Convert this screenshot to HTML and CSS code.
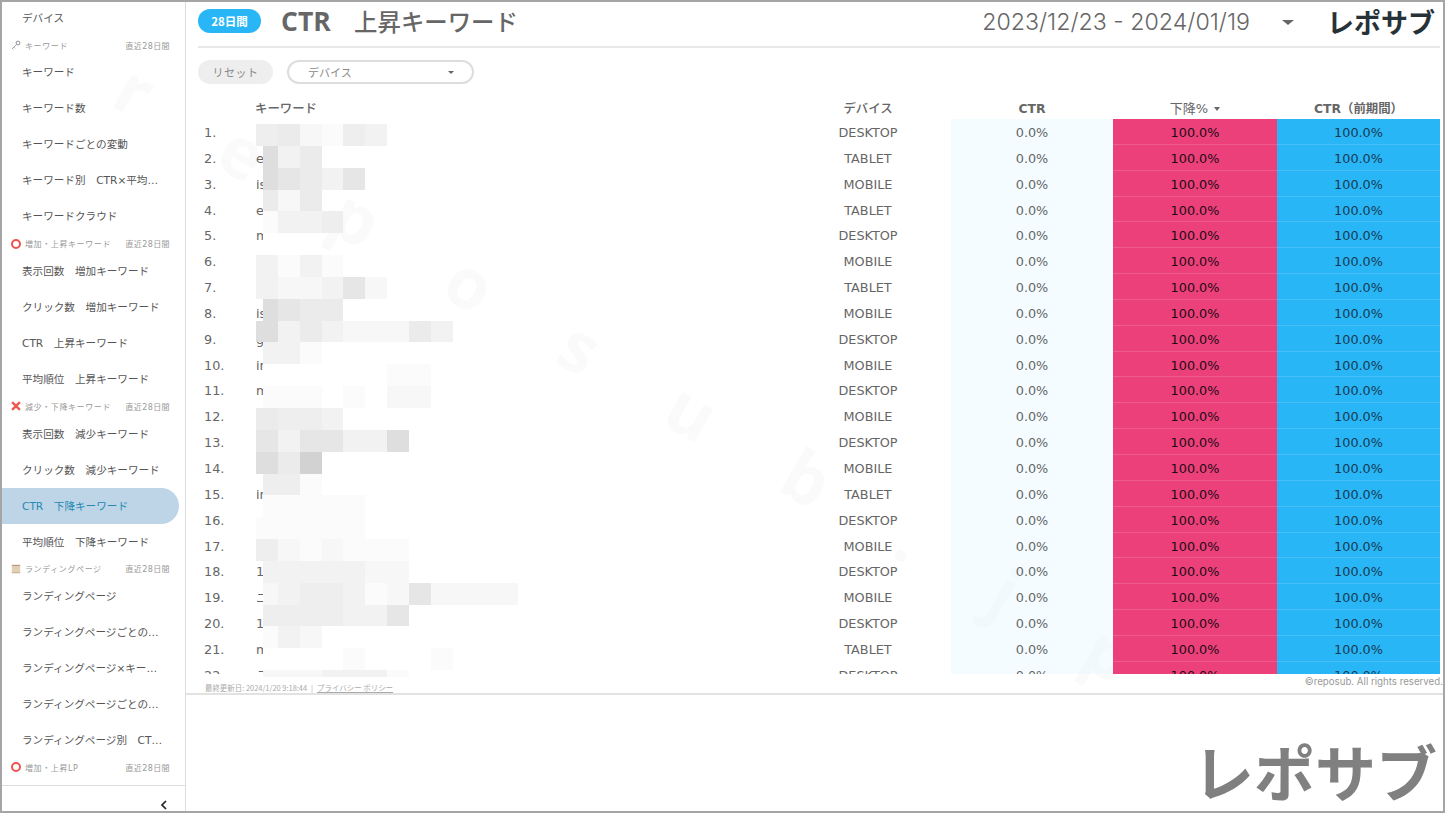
FILE: index.html
```html
<!DOCTYPE html>
<html lang="ja">
<head>
    <meta charset="UTF-8">
    <meta name="viewport" content="width=device-width, initial-scale=1.0">
    <title>CTR 上昇キーワード</title>
    <link rel="stylesheet" href="styles.css">
</head>
<body>
<div class="page">
    <div class="watermark">reposub.jp</div>

    <aside class="sidebar">
        <nav class="nav">
            <a class="nav-item">デバイス</a>
            <div class="nav-head">
                <svg class="nav-icon" viewBox="0 0 12 12"><circle cx="8.4" cy="3.6" r="2.3" fill="none" stroke="#8f8f8f" stroke-width="1.2"/><path d="M6.8 5.2 1.3 10.7M3.4 8.6l1.4 1.4M1.8 10.2l1 1" fill="none" stroke="#9a9a9a" stroke-width="1.1"/></svg>
                <span class="nav-label">キーワード</span><span class="nav-range">直近28日間</span>
            </div>
            <a class="nav-item">キーワード</a>
            <a class="nav-item">キーワード数</a>
            <a class="nav-item">キーワードごとの変動</a>
            <a class="nav-item">キーワード別　CTR×平均順位</a>
            <a class="nav-item">キーワードクラウド</a>
            <div class="nav-head">
                <span class="ring"></span>
                <span class="nav-label">増加・上昇キーワード</span><span class="nav-range">直近28日間</span>
            </div>
            <a class="nav-item">表示回数　増加キーワード</a>
            <a class="nav-item">クリック数　増加キーワード</a>
            <a class="nav-item">CTR　上昇キーワード</a>
            <a class="nav-item">平均順位　上昇キーワード</a>
            <div class="nav-head">
                <svg class="nav-icon" viewBox="0 0 12 12"><path d="M1.3 1.3 10.7 10.7M10.7 1.3 1.3 10.7" fill="none" stroke="#ea5a50" stroke-width="2.8"/></svg>
                <span class="nav-label">減少・下降キーワード</span><span class="nav-range">直近28日間</span>
            </div>
            <a class="nav-item">表示回数　減少キーワード</a>
            <a class="nav-item">クリック数　減少キーワード</a>
            <a class="nav-item active">CTR　下降キーワード</a>
            <a class="nav-item">平均順位　下降キーワード</a>
            <div class="nav-head">
                <svg class="nav-icon" viewBox="0 0 12 12"><rect x="1" y="1" width="10" height="10" fill="#e2d0b6"/><rect x="1" y="1" width="10" height="1.5" fill="#b9a180"/><rect x="1" y="9.8" width="10" height="1.2" fill="#c9b292"/></svg>
                <span class="nav-label">ランディングページ</span><span class="nav-range">直近28日間</span>
            </div>
            <a class="nav-item">ランディングページ</a>
            <a class="nav-item">ランディングページごとの変動</a>
            <a class="nav-item">ランディングページ×キーワード</a>
            <a class="nav-item">ランディングページごとの表示回数</a>
            <a class="nav-item">ランディングページ別　CTR×平均順位</a>
            <div class="nav-head">
                <span class="ring"></span>
                <span class="nav-label">増加・上昇LP</span><span class="nav-range">直近28日間</span>
            </div>
        </nav>
        <div class="nav-foot">
            <svg class="chevron" viewBox="0 0 8 10"><path d="M6 1 2 5l4 4" fill="none" stroke="#222" stroke-width="1.7"/></svg>
        </div>
    </aside>

    <main class="main">
        <section class="report">
            <header class="topbar">
                <span class="badge">28日間</span>
                <h1 class="title"><b>CTR</b>　上昇キーワード</h1>
                <span class="dates">2023/12/23 - 2024/01/19</span>
                <span class="date-caret"></span>
                <span class="logo">レポサブ</span>
            </header>

            <div class="filters">
                <button class="reset">リセット</button>
                <div class="select">デバイス<span class="select-caret"></span></div>
            </div>

            <div class="table">
                <div class="row head">
                    <div></div>
                    <div class="kw-head">キーワード</div>
                    <div class="num">デバイス</div>
                    <div class="num strong">CTR</div>
                    <div class="num sorted">下降%<span class="sort-caret"></span></div>
                    <div class="num strong">CTR（前期間）</div>
                </div>
                <div class="rows">
                    <div class="row"><div class="rank">1.</div><div class="kw"></div><div class="num">DESKTOP</div><div class="num ctr">0.0%</div><div class="num drop">100.0%</div><div class="num prev">100.0%</div></div>
                    <div class="row"><div class="rank">2.</div><div class="kw">e</div><div class="num">TABLET</div><div class="num ctr">0.0%</div><div class="num drop">100.0%</div><div class="num prev">100.0%</div></div>
                    <div class="row"><div class="rank">3.</div><div class="kw">is</div><div class="num">MOBILE</div><div class="num ctr">0.0%</div><div class="num drop">100.0%</div><div class="num prev">100.0%</div></div>
                    <div class="row"><div class="rank">4.</div><div class="kw">e</div><div class="num">TABLET</div><div class="num ctr">0.0%</div><div class="num drop">100.0%</div><div class="num prev">100.0%</div></div>
                    <div class="row"><div class="rank">5.</div><div class="kw">m</div><div class="num">DESKTOP</div><div class="num ctr">0.0%</div><div class="num drop">100.0%</div><div class="num prev">100.0%</div></div>
                    <div class="row"><div class="rank">6.</div><div class="kw">テ</div><div class="num">MOBILE</div><div class="num ctr">0.0%</div><div class="num drop">100.0%</div><div class="num prev">100.0%</div></div>
                    <div class="row"><div class="rank">7.</div><div class="kw"></div><div class="num">TABLET</div><div class="num ctr">0.0%</div><div class="num drop">100.0%</div><div class="num prev">100.0%</div></div>
                    <div class="row"><div class="rank">8.</div><div class="kw">is</div><div class="num">MOBILE</div><div class="num ctr">0.0%</div><div class="num drop">100.0%</div><div class="num prev">100.0%</div></div>
                    <div class="row"><div class="rank">9.</div><div class="kw">g</div><div class="num">DESKTOP</div><div class="num ctr">0.0%</div><div class="num drop">100.0%</div><div class="num prev">100.0%</div></div>
                    <div class="row"><div class="rank">10.</div><div class="kw">in</div><div class="num">MOBILE</div><div class="num ctr">0.0%</div><div class="num drop">100.0%</div><div class="num prev">100.0%</div></div>
                    <div class="row"><div class="rank">11.</div><div class="kw">m</div><div class="num">DESKTOP</div><div class="num ctr">0.0%</div><div class="num drop">100.0%</div><div class="num prev">100.0%</div></div>
                    <div class="row"><div class="rank">12.</div><div class="kw"></div><div class="num">MOBILE</div><div class="num ctr">0.0%</div><div class="num drop">100.0%</div><div class="num prev">100.0%</div></div>
                    <div class="row"><div class="rank">13.</div><div class="kw"></div><div class="num">DESKTOP</div><div class="num ctr">0.0%</div><div class="num drop">100.0%</div><div class="num prev">100.0%</div></div>
                    <div class="row"><div class="rank">14.</div><div class="kw">e</div><div class="num">MOBILE</div><div class="num ctr">0.0%</div><div class="num drop">100.0%</div><div class="num prev">100.0%</div></div>
                    <div class="row"><div class="rank">15.</div><div class="kw">in</div><div class="num">TABLET</div><div class="num ctr">0.0%</div><div class="num drop">100.0%</div><div class="num prev">100.0%</div></div>
                    <div class="row"><div class="rank">16.</div><div class="kw"></div><div class="num">DESKTOP</div><div class="num ctr">0.0%</div><div class="num drop">100.0%</div><div class="num prev">100.0%</div></div>
                    <div class="row"><div class="rank">17.</div><div class="kw"></div><div class="num">MOBILE</div><div class="num ctr">0.0%</div><div class="num drop">100.0%</div><div class="num prev">100.0%</div></div>
                    <div class="row"><div class="rank">18.</div><div class="kw">1</div><div class="num">DESKTOP</div><div class="num ctr">0.0%</div><div class="num drop">100.0%</div><div class="num prev">100.0%</div></div>
                    <div class="row"><div class="rank">19.</div><div class="kw">ニ</div><div class="num">MOBILE</div><div class="num ctr">0.0%</div><div class="num drop">100.0%</div><div class="num prev">100.0%</div></div>
                    <div class="row"><div class="rank">20.</div><div class="kw">1</div><div class="num">DESKTOP</div><div class="num ctr">0.0%</div><div class="num drop">100.0%</div><div class="num prev">100.0%</div></div>
                    <div class="row"><div class="rank">21.</div><div class="kw">m</div><div class="num">TABLET</div><div class="num ctr">0.0%</div><div class="num drop">100.0%</div><div class="num prev">100.0%</div></div>
                    <div class="row"><div class="rank">22.</div><div class="kw">テ</div><div class="num">DESKTOP</div><div class="num ctr">0.0%</div><div class="num drop">100.0%</div><div class="num prev">100.0%</div></div>
                </div>
            </div>

            <div class="report-foot">
                <span class="updated">最終更新日: 2024/1/20 9:18:44<span class="sep">|</span><a class="policy">プライバシー ポリシー</a></span>
                <span class="copy">©reposub. All rights reserved.</span>
            </div>

            <!-- keyword blur -->
            <div class="mosaic">
                <div><i class="s4"></i><i class="s5"></i><i class="s2"></i><i class="s1"></i><i class="s4"></i><i class="s3"></i></div>
                <div><i class="clip s7"></i><i class="s3"></i><i class="s5"></i></div>
                <div><i class="clip s7"></i><i class="s6"></i><i class="s5"></i><i class="s3"></i><i class="s6"></i></div>
                <div><i class="clip s5"></i><i class="s2"></i><i class="s5"></i></div>
                <div><i class="clip s1"></i><i class="s3"></i><i class="s3"></i><i class="s4"></i></div>
                <div><i class="clip s0"></i><i class="s0"></i><i class="s0"></i></div>
                <div><i class="s3"></i><i class="s1"></i><i class="s3"></i><i class="s1"></i></div>
                <div><i class="s3"></i><i class="s2"></i><i class="s2"></i><i class="s3"></i><i class="s6"></i><i class="s2"></i></div>
                <div><i class="clip s7"></i><i class="s6"></i><i class="s5"></i><i class="s5"></i></div>
                <div><i class="s7"></i><i class="s3"></i><i class="s5"></i><i class="s3"></i><i class="s2"></i><i class="s2"></i><i class="s2"></i><i class="s5"></i><i class="s3"></i></div>
                <div><i class="clip s3"></i><i class="s3"></i><i class="s1"></i></div>
                <div><i class="clip s0"></i><i class="s0"></i><i class="s0"></i><i class="s0"></i><i class="s0"></i><i class="s0"></i><i class="s1"></i><i class="s1"></i></div>
                <div><i class="clip s1"></i><i class="s1"></i><i class="s1"></i><i class="s0"></i><i class="s1"></i><i class="s0"></i><i class="s2"></i><i class="s2"></i></div>
                <div><i class="s5"></i><i class="s4"></i><i class="s4"></i><i class="s3"></i></div>
                <div><i class="s6"></i><i class="s3"></i><i class="s6"></i><i class="s6"></i><i class="s3"></i><i class="s3"></i><i class="s7"></i></div>
                <div><i class="s7"></i><i class="s5"></i><i class="s8"></i></div>
                <div><i class="clip s4"></i><i class="s4"></i><i class="s1"></i></div>
                <div><i class="clip s1"></i><i class="s1"></i><i class="s1"></i><i class="s1"></i><i class="s1"></i></div>
                <div><i class="s1"></i><i class="s1"></i><i class="s1"></i><i class="s1"></i><i class="s1"></i></div>
                <div><i class="s4"></i><i class="s2"></i><i class="s1"></i><i class="s2"></i><i class="s1"></i><i class="s1"></i><i class="s1"></i></div>
                <div><i class="clip s3"></i><i class="s3"></i><i class="s3"></i><i class="s3"></i><i class="s3"></i><i class="s2"></i><i class="s2"></i></div>
                <div><i class="clip s2"></i><i class="s3"></i><i class="s4"></i><i class="s4"></i><i class="s3"></i><i class="s1"></i><i class="s2"></i><i class="s6"></i><i class="s2"></i><i class="s2"></i><i class="s2"></i><i class="s2"></i></div>
                <div><i class="clip s4"></i><i class="s4"></i><i class="s4"></i><i class="s4"></i><i class="s3"></i><i class="s3"></i><i class="s6"></i></div>
                <div><i class="clip s1"></i><i class="s3"></i><i class="s2"></i></div>
                <div><i class="clip s0"></i><i class="s0"></i><i class="s0"></i><i class="s0"></i><i class="s1"></i><i class="s0"></i><i class="s0"></i><i class="s0"></i><i class="s1"></i></div>
                <div class="last"><i class="clip s2"></i><i class="s2"></i><i class="s2"></i><i class="s3"></i><i class="s3"></i><i class="s3"></i><i class="s1"></i></div>
            </div>
        </section>

        <div class="brand">レポサブ</div>
    </main>
</div>
</body>
</html>
```

FILE: styles.css
```css
* {
    box-sizing: border-box;
}
html, body {
    margin: 0;
    height: 100%;
    overflow: hidden;
}
body {
    font-family: "Noto Sans CJK JP", sans-serif;
    color: #666;
    background-color: #fff;
}
.page {
    position: relative;
    display: flex;
    width: 1445px;
    height: 813px;
    border: 2px solid #a5a5a5;
    overflow: hidden;
}

/* sidebar */
.sidebar {
    position: relative;
    z-index: 1;
    display: flex;
    flex-direction: column;
    flex: none;
    width: 184px;
    border-right: 1px solid #ddd;
}
.nav {
    flex: none;
    height: 785.2px;
    margin-top: -2.2px;
    overflow: hidden;
}
.nav-item {
    display: block;
    height: 36px;
    width: 177px;
    padding-left: 20px;
    padding-right: 15px;
    font-family: "DejaVu Sans", "Noto Sans CJK JP", sans-serif;
    font-size: 10.6px;
    line-height: 36px;
    color: #555;
    white-space: nowrap;
    overflow: hidden;
    text-overflow: ellipsis;
}
.nav-item.active {
    background-color: #bdd5e6;
    border-radius: 0 18px 18px 0;
    color: #2489b3;
}
.nav-head {
    display: flex;
    align-items: center;
    height: 18.6px;
    padding: 0 15px 0 9px;
    font-family: "DejaVu Sans", "Noto Sans CJK JP", sans-serif;
    font-size: 8px;
    color: #999;
}
.nav-icon {
    flex: none;
    width: 10px;
    height: 10px;
}
.ring {
    flex: none;
    width: 10px;
    height: 10px;
    border: 2px solid #ef5350;
    border-radius: 50%;
}
.nav-label {
    margin-left: 4px;
    letter-spacing: 0.6px;
}
.nav-range {
    margin-left: auto;
    letter-spacing: 0.4px;
}
.nav-foot {
    display: flex;
    justify-content: flex-end;
    flex: 1;
    padding: 14px 17px 0 0;
    border-top: 1px solid #ddd;
}
.chevron {
    width: 8px;
    height: 10px;
}

/* report */
.main {
    position: relative;
    z-index: 1;
    flex: 1;
    display: flex;
    flex-direction: column;
    min-width: 0;
}
.report {
    position: relative;
    height: 693px;
    padding: 0 3px 0 12px;
    border-bottom: 2px solid #e2e2e2;
}
.topbar {
    display: flex;
    align-items: center;
    height: 46px;
    padding-bottom: 6px;
    border-bottom: 2px solid #e8e8e8;
}
.badge {
    width: 63px;
    height: 24px;
    border-radius: 12px;
    background-color: #29b6f6;
    color: #fff;
    font-size: 11.5px;
    font-weight: 700;
    line-height: 24px;
    text-align: center;
}
.title {
    margin: 0 0 0 20px;
    font-size: 23.4px;
    font-weight: 500;
    line-height: 30px;
    color: #666;
}
.title b {
    font-family: "Open Sans", sans-serif;
    font-size: 26.5px;
    font-weight: 700;
}
.dates {
    margin: 2px 0 0 auto;
    font-family: Inter, sans-serif;
    font-size: 23.2px;
    font-weight: 300;
    color: #666;
}
.date-caret {
    margin: 2px 0 0 32px;
    border-top: 5px solid #666;
    border-left: 6px solid transparent;
    border-right: 6px solid transparent;
}
.logo {
    margin: 2px 5px 0 33px;
    font-size: 27px;
    font-weight: 700;
    line-height: 34px;
    color: #263238;
}
.filters {
    display: flex;
    align-items: center;
    gap: 14px;
    margin-top: 12px;
    height: 24px;
}
.reset {
    width: 75px;
    height: 24px;
    padding: 0;
    border: none;
    border-radius: 12px;
    background-color: #eee;
    color: #888;
    font-family: inherit;
    font-size: 11px;
    letter-spacing: 0.5px;
}
.select {
    position: relative;
    width: 187px;
    height: 24px;
    padding-left: 19px;
    border: 2px solid #ddd;
    border-radius: 12px;
    color: #888;
    font-size: 11px;
    line-height: 20px;
}
.select-caret {
    position: absolute;
    top: 9px;
    right: 18px;
    border-top: 3px solid #666;
    border-left: 3px solid transparent;
    border-right: 3px solid transparent;
}

/* table */
.table {
    margin-top: 16px;
    font-family: "DejaVu Sans", "Noto Sans CJK JP", sans-serif;
    font-size: 12.8px;
}
.rows {
    height: 555px;
    overflow: hidden;
}
.row {
    display: grid;
    grid-template-columns: 58px 529px 166px 162px 164px 163px;
    grid-template-rows: 25.85px;
    height: 25.85px;
    line-height: 28px;
}
.row.head {
    grid-template-rows: 19px;
    height: 19px;
    line-height: 17px;
    font-size: 12.4px;
    font-weight: 500;
    color: #666;
}
.kw-head {
    margin-left: -1px;
}
.strong {
    font-weight: 700;
}
.sorted {
    font-size: 13px;
    font-weight: 400;
}
.rank {
    padding-left: 6px;
    color: #666;
}
.kw {
    overflow: hidden;
    white-space: nowrap;
    color: #666;
}
.num {
    text-align: center;
}
.ctr {
    background-color: rgba(225, 245, 254, 0.35);
}
.drop {
    background-color: #ec407a;
    color: #1c0a14;
    box-shadow: inset 0 -1px 0 rgba(255, 255, 255, 0.14);
}
.prev {
    background-color: #29b6f6;
    color: #163a52;
    box-shadow: inset 0 -1px 0 rgba(255, 255, 255, 0.14);
}
.sort-caret {
    display: inline-block;
    margin-left: 6px;
    vertical-align: 2px;
    border-top: 4px solid #666;
    border-left: 3.5px solid transparent;
    border-right: 3.5px solid transparent;
}
.report-foot {
    display: flex;
    justify-content: space-between;
    align-items: flex-start;
    padding-left: 7px;
    margin-right: -3px;
}
.updated {
    margin-top: 8px;
    font-size: 7.45px;
    color: #aaa;
}
.sep {
    margin: 0 4px;
}
.policy {
    text-decoration: underline;
}
.copy {
    margin-top: 2px;
    font-family: Inter, sans-serif;
    font-size: 9.7px;
    color: #999;
}

/* mosaic over the keyword column */
.mosaic {
    position: absolute;
    left: 70px;
    top: 122px;
}
.mosaic div {
    display: flex;
    height: 21.85px;
}
.mosaic div.last {
    height: 7px;
    overflow: hidden;
}
.mosaic i {
    display: block;
    flex: none;
    width: 21.85px;
    height: 21.85px;
}
.mosaic i.clip {
    padding-left: 7px;
    background-clip: content-box;
}
.s0 { background-color: #fff; }
.s1 { background-color: #fbfbfb; }
.s2 { background-color: #f7f7f7; }
.s3 { background-color: #f2f2f2; }
.s4 { background-color: #eee; }
.s5 { background-color: #ebebeb; }
.s6 { background-color: #e6e6e6; }
.s7 { background-color: #dedede; }
.s8 { background-color: #d2d2d2; }

/* bottom logo */
.brand {
    flex: 1;
    padding: 41px 6px 0 0;
    text-align: right;
    font-size: 61px;
    font-weight: 700;
    line-height: 70px;
    color: #808080;
}

.watermark {
    position: absolute;
    left: 120px;
    top: 39px;
    font-family: "Open Sans", sans-serif;
    font-size: 70px;
    font-weight: 700;
    letter-spacing: 88px;
    line-height: 80px;
    white-space: nowrap;
    color: rgba(0, 0, 0, 0.02);
    transform: rotate(30deg);
    transform-origin: 0 50%;
    pointer-events: none;
}
```
